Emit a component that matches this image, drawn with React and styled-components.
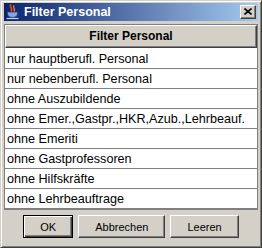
import styled, { createGlobalStyle } from 'styled-components';

const items = [
    'nur hauptberufl. Personal',
    'nur nebenberufl. Personal',
    'ohne Auszubildende',
    'ohne Emer.,Gastpr.,HKR,Azub.,Lehrbeauf.',
    'ohne Emeriti',
    'ohne Gastprofessoren',
    'ohne Hilfskräfte',
    'ohne Lehrbeauftrage',
];

function JavaIcon() {
    return (
        <svg width="16" height="16" viewBox="0 0 16 16">
            <path d="M6 0.5 C3.5 3 8.5 4 6 7.5" stroke="#f04020" strokeWidth="1.6" fill="none" />
            <path d="M9 1.5 C7 3.5 11 4.5 9 7.5" stroke="#f08020" strokeWidth="1.4" fill="none" />
            <path d="M2.5 8 H12.5 V9.5 C12.5 12 10.5 13.5 7.5 13.5 C4.5 13.5 2.5 12 2.5 9.5 Z" fill="#8aa4d8" stroke="#2a3c8a" strokeWidth="0.8" />
            <path d="M12.5 9 C15 9 15 11.5 12 12" stroke="#2a3c8a" strokeWidth="1" fill="none" />
            <path d="M1.5 14.5 H13.5" stroke="#c8d4f0" strokeWidth="1.2" />
        </svg>
    );
}

function App() {
    return (
        <>
            <GlobalStyle />
            <Window>
                <TitleBar>
                    <JavaIcon />
                    <Title>Filter Personal</Title>
                    <CloseButton>
                        <svg width="8" height="7" viewBox="0 0 8 7">
                            <path d="M0.5 0.5 L7.5 6.5 M7.5 0.5 L0.5 6.5" stroke="#000" strokeWidth="1.6" />
                        </svg>
                    </CloseButton>
                </TitleBar>
                <Content>
                    <Table>
                        <Header>Filter Personal</Header>
                        {items.map((item) => (
                            <Row key={item}>{item}</Row>
                        ))}
                    </Table>
                    <Buttons>
                        <Button $default>OK</Button>
                        <Button>Abbrechen</Button>
                        <Button>Leeren</Button>
                    </Buttons>
                </Content>
            </Window>
        </>
    );
}

const GlobalStyle = createGlobalStyle`
    body {
        margin: 0;
        font-family: "Liberation Sans", Arial, sans-serif;
    }
`;

const Window = styled.div`
    width: 262px;
    height: 248px;
    box-sizing: border-box;
    background: #d4d0c8;
    border: 1px solid;
    border-color: #d4d0c8 #404040 #404040 #d4d0c8;
    box-shadow: inset 1px 1px #ffffff, inset -1px -1px #808080;
    padding: 2px 3px 3px 3px;
    display: flex;
    flex-direction: column;
`;

const TitleBar = styled.div`
    height: 18px;
    background: linear-gradient(to right, #0a246a, #a6caf0);
    display: flex;
    align-items: center;
    padding: 0 2px 0 1px;
    gap: 3px;
`;

const Title = styled.span`
    flex: 1;
    color: #ffffff;
    font-weight: bold;
    font-size: 12.5px;
`;

const CloseButton = styled.div`
    width: 16px;
    height: 14px;
    box-sizing: border-box;
    background: #d4d0c8;
    border: 1px solid;
    border-color: #ffffff #404040 #404040 #ffffff;
    box-shadow: inset -1px -1px #808080;
    display: flex;
    align-items: center;
    justify-content: center;
    padding-bottom: 1px;
`;

const Content = styled.div`
    flex: 1;
    display: flex;
    flex-direction: column;
    padding-top: 3px;
`;

const Table = styled.div`
    border: 1px solid #808080;
    background: #ffffff;
    display: flex;
    flex-direction: column;
`;

const Header = styled.div`
    height: 20px;
    box-sizing: content-box;
    background: #d4d0c8;
    border: 1px solid;
    border-color: #ffffff #404040 #404040 #ffffff;
    box-shadow: inset -1px -1px #808080;
    padding-bottom: 1px;
    font-weight: bold;
    font-size: 12px;
    display: flex;
    align-items: center;
    justify-content: center;
    margin-bottom: 1px;
`;

const Row = styled.div`
    height: 20px;
    box-sizing: border-box;
    border-bottom: 1px solid #808080;
    padding-left: 2px;
    font-size: 12.6px;
    display: flex;
    align-items: center;
    color: #000000;
`;

const Buttons = styled.div`
    display: flex;
    justify-content: center;
    gap: 5px;
    margin-top: 5px;
`;

const Button = styled.button`
    height: 23px;
    padding: 0 16px;
    font-family: "Liberation Sans", Arial, sans-serif;
    font-size: 11px;
    color: #000000;
    background: #d4d0c8;
    border: 1px solid;
    border-color: ${(p) => (p.$default ? '#000000' : '#ffffff #404040 #404040 #ffffff')};
    box-shadow: ${(p) =>
        p.$default
            ? 'inset 1px 1px #ffffff, inset -1px -1px #404040, inset -2px -2px #808080'
            : 'inset -1px -1px #808080'};
    border-radius: 0;
`;

export default App;
